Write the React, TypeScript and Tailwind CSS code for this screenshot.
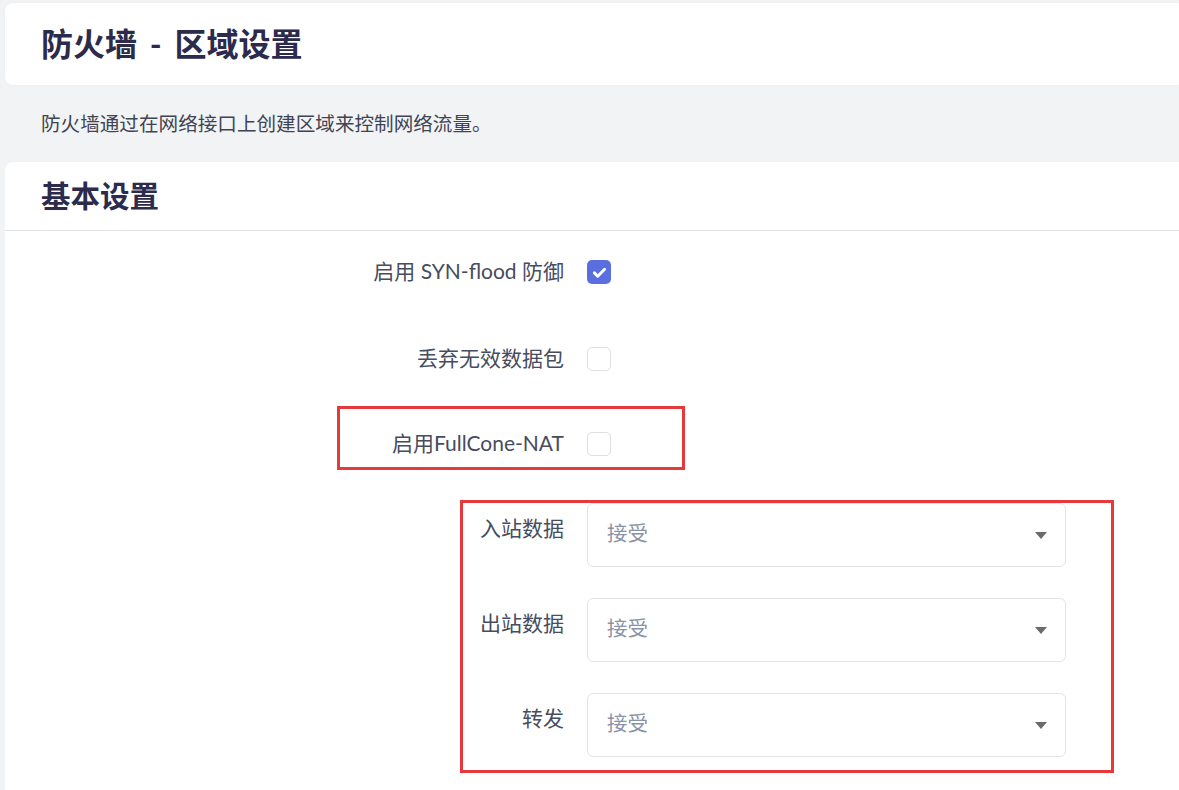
import React from "react";

const FONT = { fontFamily: 'Lato, "Noto Sans CJK SC", sans-serif' };

function CheckBox({ checked }: { checked?: boolean }) {
  if (checked) {
    return (
      <span className="flex h-6 w-6 items-center justify-center rounded-[5px] bg-[#5b6ee0]">
        <svg viewBox="0 0 16 16" className="h-[17px] w-[17px]" fill="none">
          <path d="M3.2 8.4l3.1 3.1L12.8 5" stroke="#fff" strokeWidth="2.8" strokeLinecap="round" strokeLinejoin="round" />
        </svg>
      </span>
    );
  }
  return <span className="block h-6 w-6 rounded-[5px] border border-[#dedfe3] bg-white" />;
}

function CheckRow({ label, checked, className }: { label: string; checked?: boolean; className?: string }) {
  return (
    <div className={`flex h-11 items-center ${className ?? ""}`}>
      <span className="w-[559px] pb-[2px] text-right text-[21px] text-[#474c5e]">{label}</span>
      <span className="ml-[23px]">
        <CheckBox checked={checked} />
      </span>
    </div>
  );
}

function SelectRow({ label, className }: { label: string; className?: string }) {
  return (
    <div className={`flex items-start ${className ?? ""}`}>
      <span className="w-[559px] pt-[9px] text-right text-[21px] text-[#474c5e]">{label}</span>
      <div className="ml-[23px] flex h-[64px] w-[479px] items-center justify-between rounded-md border border-[#e3e4e8] bg-white pl-[19px] pr-[18px]">
        <span className="pb-[3px] text-[20.5px] text-[#8a93a5]">接受</span>
        <svg viewBox="0 0 12 7" className="h-[7px] w-[12px]">
          <path d="M0 0h12L6 7z" fill="#6b6b6b" />
        </svg>
      </div>
    </div>
  );
}

export default function App() {
  return (
    <div style={FONT} className="relative h-[790px] w-[1179px] overflow-hidden bg-[#f2f3f5] pl-[5px] pt-[3px]">
      <div className="flex h-[82px] items-center rounded-l-lg bg-white pl-9 shadow-[0_0_3px_rgba(0,0,0,0.04)]">
        <h1 className="text-[32px] font-bold text-[#2c2b4b]">
          防火墙<span className="px-[5px]"> - </span>区域设置
        </h1>
      </div>

      <p className="mt-[27px] pl-9 text-[19.6px] leading-6 text-[#3f4452]">防火墙通过在网络接口上创建区域来控制网络流量。</p>

      <div className="mt-[26px] h-[700px] rounded-l-lg bg-white">
        <div className="flex h-[69px] items-center border-b border-[#e2e3e6] pl-9">
          <h2 className="text-[29.5px] font-bold text-[#2c2b4b]">基本设置</h2>
        </div>

        <div className="flex flex-col">
          <CheckRow className="mt-[19px]" label="启用 SYN-flood 防御" checked />
          <CheckRow className="mt-[43px]" label="丢弃无效数据包" />
          <CheckRow className="mt-[41px]" label="启用FullCone-NAT" />
          <SelectRow className="mt-[37px]" label="入站数据" />
          <SelectRow className="mt-[31px]" label="出站数据" />
          <SelectRow className="mt-[31px]" label="转发" />
        </div>
      </div>

      <div className="absolute left-[337px] top-[406px] h-[64px] w-[348px] border-[3px] border-[#e5393c]" />
      <div className="absolute left-[460px] top-[500px] h-[273px] w-[654px] border-[3px] border-[#e5393c]" />
    </div>
  );
}
